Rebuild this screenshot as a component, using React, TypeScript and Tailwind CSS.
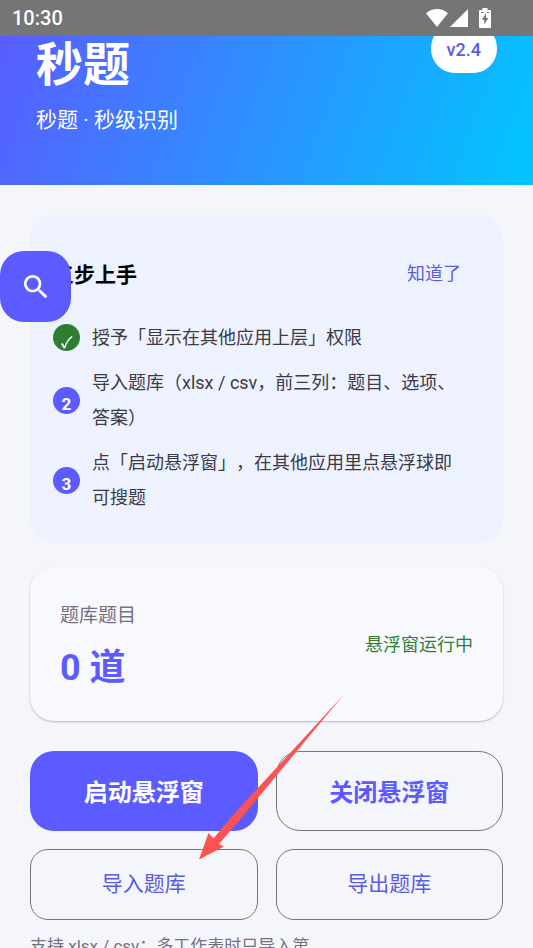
import type { ReactNode } from "react";

function StatusBar() {
  return (
    <div className="sticky top-0 z-20 flex h-9 items-center justify-between bg-[#757575] pr-10 pl-3 text-white">
      <span className="text-xl font-medium">10:30</span>
      <div className="flex items-center">
        <svg className="h-5 w-6" viewBox="0 0 24 20" fill="currentColor" aria-hidden="true">
          <path d="M12 19 L1 5.2 C4 2.6 8 1 12 1 C16 1 20 2.6 23 5.2 Z" />
        </svg>
        <svg className="h-5 w-5" viewBox="0 0 20 20" fill="currentColor" aria-hidden="true">
          <path d="M19 1 V19 H1 Z" />
        </svg>
        <svg className="ml-2 h-5 w-4" viewBox="0 0 16 20" fill="currentColor" aria-hidden="true">
          <path
            fillRule="evenodd"
            d="M5.5 0 H10.5 V2 H13 Q14 2 14 3 V19 Q14 20 13 20 H3 Q2 20 2 19 V3 Q2 2 3 2 H5.5 Z M4 4 V5 H6.5 V4 Z M10 4 V5 H12 V4 Z M9 5.5 L4.8 11.8 H7.3 V16.5 L11.3 10 H9 Z"
          />
        </svg>
      </div>
    </div>
  );
}

function Header() {
  return (
    <header className="-mt-9 flex items-start justify-between bg-[linear-gradient(110deg,#5b5bff_0%,#00c6ff_100%)] px-9 pt-6 pb-12 text-white">
      <div className="pt-[10px]">
        <h1 className="text-[47px] leading-[62px] font-bold">秒题</h1>
        <p className="mt-[7px] text-[21px] leading-[34px]">秒题 · 秒级识别</p>
      </div>
      <span className="flex h-[49px] items-center rounded-3xl bg-white px-4 pt-[2px] text-lg font-medium text-[#5b5bdf]">
        v2.4
      </span>
    </header>
  );
}

function Step({ badge, done, children }: { badge: string; done?: boolean; children: ReactNode }) {
  return (
    <li className="flex items-center gap-3">
      <span
        className={`flex size-[27px] shrink-0 items-end justify-center overflow-hidden rounded-full text-[17px] leading-[19px] font-bold text-white ${
          done ? "bg-[#2e7d32]" : "bg-[#5b5bff]"
        }`}
      >
        {done ? (
          <svg className="mb-[2px] h-[13px] w-3" viewBox="0 0 12 13" fill="none" stroke="currentColor" role="img" aria-label={badge}>
            <path d="M0.8 7.5 L3.6 12" strokeWidth="2" />
            <path d="M3.4 12.4 C5 7.5 7.5 3 11.2 0.5" strokeWidth="1.4" />
          </svg>
        ) : (
          badge
        )}
      </span>
      <p>{children}</p>
    </li>
  );
}

function GuideCard() {
  return (
    <section className="rounded-3xl bg-[#eef2ff] pt-10 pr-9 pb-7 pl-[23px]">
      <div className="flex items-start justify-between pr-[6px]">
        <h2 className="text-[21px] leading-[41px] font-bold text-black">三步上手</h2>
        <button type="button" className="text-lg leading-[38px] text-[#5b5bdf]">
          知道了
        </button>
      </div>
      <ol className="mt-6 flex flex-col gap-[10px] text-lg leading-[35px] text-[#3a3a48]">
        <Step badge="✓" done>
          授予「显示在其他应用上层」权限
        </Step>
        <Step badge="2">导入题库（xlsx / csv，前三列：题目、选项、答案）</Step>
        <Step badge="3">点「启动悬浮窗」，在其他应用里点悬浮球即可搜题</Step>
      </ol>
    </section>
  );
}

function StatsCard() {
  return (
    <section className="mt-6 flex items-center justify-between rounded-3xl bg-[#f8f8ff] px-[30px] pt-7 pb-[26px] shadow-[0_1px_2px_rgba(0,0,0,0.25)]">
      <div>
        <p className="pt-1 text-[19px] leading-[34px] text-[#74717f]">题库题目</p>
        <p className="mt-2 text-4xl leading-[54px] font-bold text-[#5b5bff]">0 道</p>
      </div>
      <p className="text-lg text-[#2e7d32]">悬浮窗运行中</p>
    </section>
  );
}

function Arrow() {
  return (
    <svg
      className="pointer-events-none absolute top-[480px] left-[168px] h-[166px] w-[146px]"
      viewBox="198 695 146 166"
      fill="#fa5352"
      aria-hidden="true"
    >
      <path d="M343.5 695 L240 819.5 L219 844 L224 846.5 L199 859.5 L208.5 833 L213.5 838.5 L233 815 Z" />
    </svg>
  );
}

export default function App() {
  return (
    <div className="relative h-screen overflow-hidden bg-[#f5f6fc] font-[Roboto,'Noto_Sans_CJK_SC',sans-serif] [text-spacing-trim:space-all]" lang="zh-CN">
      <StatusBar />
      <Header />
      <main className="relative mx-[30px] mt-[30px]">
        <GuideCard />
        <StatsCard />
        <div className="mt-[30px] grid grid-cols-2 gap-[18px]">
          <button type="button" className="h-20 rounded-3xl bg-[#5b5bff] pt-1 text-2xl font-bold text-white">
            启动悬浮窗
          </button>
          <button type="button" className="h-20 rounded-3xl border border-[#79747e] pt-1 text-2xl font-bold text-[#5b5bff]">
            关闭悬浮窗
          </button>
          <button type="button" className="h-[71px] rounded-[18px] border border-[#79747e] text-[21px] text-[#5b5bdf]">
            导入题库
          </button>
          <button type="button" className="h-[71px] rounded-[18px] border border-[#79747e] text-[21px] text-[#5b5bdf]">
            导出题库
          </button>
        </div>
        <p className="mt-3 text-[17px] leading-7 text-[#74717f]">支持 xlsx / csv：多工作表时只导入第</p>
        <Arrow />
      </main>
      <button
        type="button"
        aria-label="搜索"
        className="absolute top-[251px] left-0 flex size-[71px] items-center justify-center rounded-3xl bg-[#5b5bff] text-white"
      >
        <svg className="size-8" viewBox="0 0 24 24" fill="currentColor" aria-hidden="true">
          <path d="M15.5 14h-.79l-.28-.27C15.41 12.59 16 11.11 16 9.5 16 5.91 13.09 3 9.5 3S3 5.91 3 9.5 5.91 16 9.5 16c1.61 0 3.09-.59 4.23-1.57l.27.28v.79l5 4.99L20.49 19l-4.99-5zm-6 0C7.01 14 5 11.99 5 9.5S7.01 5 9.5 5 14 7.01 14 9.5 11.99 14 9.5 14z" />
        </svg>
      </button>
    </div>
  );
}
